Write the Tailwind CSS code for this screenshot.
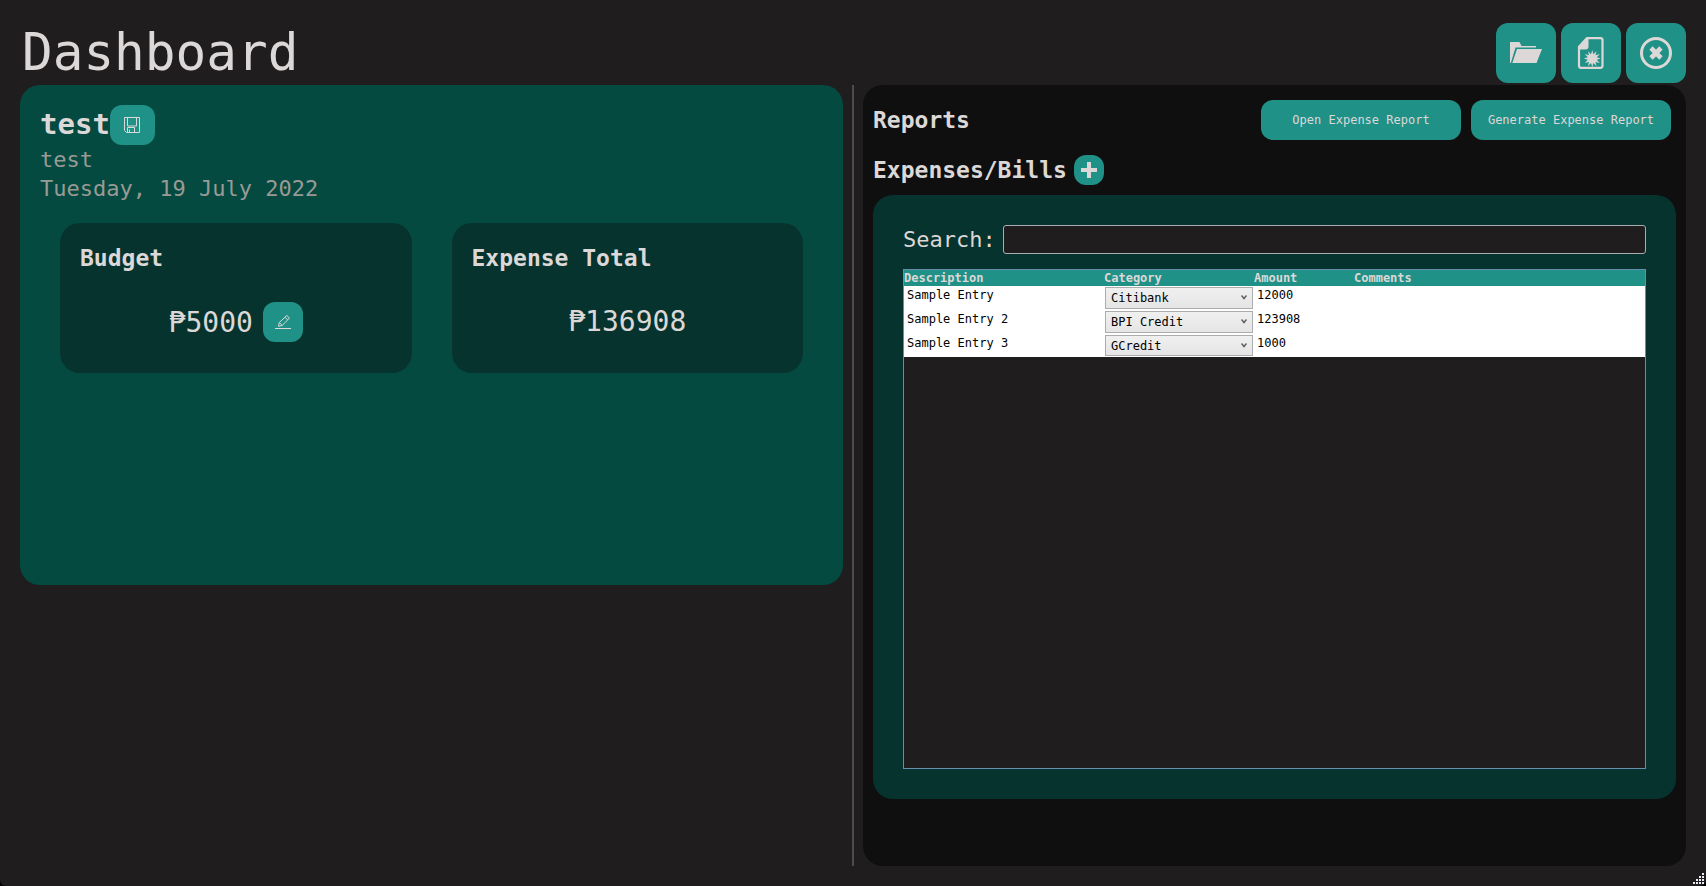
<!DOCTYPE html>
<html lang="en">
<head>
<meta charset="utf-8">
<title>Dashboard</title>
<script src="https://cdn.jsdelivr.net/npm/@tailwindcss/browser@4"></script>
</head>
<body class="bg-black font-['DejaVu_Sans_Mono',monospace] text-[#dcd8d7]">
<div class="relative flex min-h-screen flex-col rounded-b-md bg-[#1f1d1e] px-5 pb-5">
  <header class="flex h-[85px] items-end justify-between">
    <h1 class="pb-0.5 pl-0.5 text-[51px] leading-[60px]">Dashboard</h1>
    <div class="flex gap-[5px] pb-0.5">
      <button aria-label="Open" class="flex size-[60px] items-center justify-center rounded-xl bg-[#209187]">
        <svg class="size-8" viewBox="0 0 32 32" fill="#dcd8d7"><path d="M0 5h9.500l2 4H26v1.500H5.500L.8 26H0z"/><path d="M7 12h25l-5.500 14H2.300z"/></svg>
      </button>
      <button aria-label="New" class="flex size-[60px] items-center justify-center rounded-xl bg-[#209187]">
        <svg class="size-8" viewBox="0 0 32 32"><path d="M12 1.200h13.500a2 2 0 0 1 2 2v25.600a2 2 0 0 1-2 2H6a2 2 0 0 1-2-2V10z" fill="none" stroke="#dcd8d7" stroke-width="2.200"/><path d="M11 1h2.500v8.500a3 3 0 0 1-3 3H3.500V9z" fill="#dcd8d7"/><path d="m17.300 13 1 4.200 3.200-3-1 4.100 4.300-1.200-3 3.200 3.700 1.200-3.700 1.300 3 3.300-4.300-1.100 1 4-3.200-2.900-1 4.100-1.300-4.100-3 2.900 1-4-4.200 1.100 3-3.300-4-1.300 4-1.200-3-3.200 4.200 1.200-1-4.100 3 3z" fill="#dcd8d7"/></svg>
      </button>
      <button aria-label="Close" class="flex size-[60px] items-center justify-center rounded-xl bg-[#209187]">
        <svg class="size-8" viewBox="0 0 32 32" fill="none" stroke="#dcd8d7"><circle cx="16" cy="16" r="14.500" stroke-width="3"/><path d="m11 11 10 10m0-10-10 10" stroke-width="4.600"/></svg>
      </button>
    </div>
  </header>

  <main class="grid flex-1 grid-cols-[1fr_2px_1fr] gap-x-[9px]">
    <section class="min-h-[500px] self-start rounded-[20px] bg-[#044a40] p-5">
      <div class="flex h-10 items-center">
        <h2 class="text-[29px] font-bold">test</h2>
        <button aria-label="Save" class="flex h-10 w-[45px] items-center justify-center rounded-xl bg-[#209187]">
          <svg class="size-4" viewBox="0 0 16 16" fill="none" stroke="#dcd8d7"><path d="M.5.500h15v15h-13l-2-2z"/><path d="M3.500 1v8h9V1M3.500 15.500v-5h7v5M5.500 12.500v3"/></svg>
        </button>
      </div>
      <p class="text-[22px] leading-[30px] text-[#999a95]">test</p>
      <p class="text-[22px] leading-7 text-[#999a95]">Tuesday, 19 July 2022</p>
      <div class="mt-5 grid grid-cols-2 gap-10 px-5">
        <article class="flex h-[150px] flex-col rounded-[20px] bg-[#07332e] p-5">
          <h3 class="text-[23px] leading-[30px] font-bold">Budget</h3>
          <div class="flex flex-1 items-center justify-center gap-2.5 pt-[18px]">
            <span class="pt-0.5 text-[28px] leading-9">₱5000</span>
            <button aria-label="Edit budget" class="flex size-10 items-center justify-center rounded-xl bg-[#209187]">
              <svg class="size-4" viewBox="0 0 16 16" fill="none" stroke="#dcd8d7"><path d="M0 14.500h16"/><path d="m3.500 12.300.8-3.800 7.500-7 2.700 2.600-7.300 7.300zM4.300 8.500l2.900 2.900M10 3.200l2.700 2.700"/></svg>
            </button>
          </div>
        </article>
        <article class="flex h-[150px] flex-col rounded-[20px] bg-[#07332e] p-5">
          <h3 class="text-[23px] leading-[30px] font-bold">Expense Total</h3>
          <div class="flex flex-1 items-center justify-center pt-[18px]">
            <span class="text-[28px] leading-9">₱136908</span>
          </div>
        </article>
      </div>
    </section>

    <div class="bg-[#4d4b4c]"></div>

    <section class="flex flex-col rounded-[20px] bg-[#0f0f0f] px-2.5 pt-[15px]">
      <div class="flex h-10 items-center justify-between pr-[5px]">
        <h2 class="text-[23px] font-bold">Reports</h2>
        <div class="flex gap-2.5 text-xs">
          <button class="h-10 w-[200px] rounded-xl bg-[#209187]">Open Expense Report</button>
          <button class="h-10 w-[200px] rounded-xl bg-[#209187]">Generate Expense Report</button>
        </div>
      </div>
      <div class="mt-[15px] flex h-[30px] items-center gap-[7px]">
        <h2 class="text-[23px] font-bold">Expenses/Bills</h2>
        <button aria-label="Add expense" class="flex size-[30px] items-center justify-center rounded-xl bg-[#209187]">
          <svg class="size-4" viewBox="0 0 16 16" fill="#dcd8d7"><path d="M6 0h4v6h6v4h-6v6H6v-6H0V6h6z"/></svg>
        </button>
      </div>
      <div class="mt-2.5 mb-[67px] flex flex-1 flex-col rounded-[20px] bg-[#07332e] p-[30px]">
        <div class="flex h-[29px] items-center gap-[7px]">
          <label for="search" class="text-[22px]">Search:</label>
          <input id="search" type="text" class="h-full min-w-0 flex-1 rounded-[3px] border border-[#abadb3] bg-[#1f1d1e] px-1 text-[22px]">
        </div>
        <div class="mt-[15px] flex-1 border border-[#688caf] bg-[#1f1d1e]">
          <table class="w-full table-fixed border-collapse text-xs">
            <colgroup><col class="w-[200px]"><col class="w-[150px]"><col class="w-[100px]"><col></colgroup>
            <thead class="bg-[#209187] text-left">
              <tr class="h-4 leading-4"><th>Description</th><th>Category</th><th>Amount</th><th>Comments</th></tr>
            </thead>
            <tbody class="bg-white leading-4 text-black">
              <tr class="h-6 align-top">
                <td class="pt-px pl-[3px]">Sample Entry</td>
                <td class="p-px"><div class="relative"><select aria-label="Category of Sample Entry" class="block h-[22px] w-full appearance-none border border-[#acacac] bg-linear-to-b from-[#f0f0f0] to-[#e5e5e5] pl-[5px]"><option>Citibank</option><option>BPI Credit</option><option>GCredit</option></select><svg class="pointer-events-none absolute top-2 right-[6px] h-[5px] w-[6px]" viewBox="0 0 6 5" fill="none" stroke="#606060" stroke-width="1.500"><path d="m.5.500 2.500 3 2.500-3"/></svg></div></td>
                <td class="pt-px pl-[3px]">12000</td><td></td>
              </tr>
              <tr class="h-6 align-top">
                <td class="pt-px pl-[3px]">Sample Entry 2</td>
                <td class="p-px"><div class="relative"><select aria-label="Category of Sample Entry 2" class="block h-[22px] w-full appearance-none border border-[#acacac] bg-linear-to-b from-[#f0f0f0] to-[#e5e5e5] pl-[5px]"><option>Citibank</option><option selected>BPI Credit</option><option>GCredit</option></select><svg class="pointer-events-none absolute top-2 right-[6px] h-[5px] w-[6px]" viewBox="0 0 6 5" fill="none" stroke="#606060" stroke-width="1.500"><path d="m.5.500 2.500 3 2.500-3"/></svg></div></td>
                <td class="pt-px pl-[3px]">123908</td><td></td>
              </tr>
              <tr class="h-[23px] align-top">
                <td class="pt-px pl-[3px]">Sample Entry 3</td>
                <td class="p-px"><div class="relative"><select aria-label="Category of Sample Entry 3" class="block h-[21px] w-full appearance-none border border-[#acacac] bg-linear-to-b from-[#f0f0f0] to-[#e5e5e5] pl-[5px]"><option>Citibank</option><option>BPI Credit</option><option selected>GCredit</option></select><svg class="pointer-events-none absolute top-2 right-[6px] h-[5px] w-[6px]" viewBox="0 0 6 5" fill="none" stroke="#606060" stroke-width="1.500"><path d="m.5.500 2.500 3 2.500-3"/></svg></div></td>
                <td class="pt-px pl-[3px]">1000</td><td></td>
              </tr>
            </tbody>
          </table>
        </div>
      </div>
    </section>
  </main>

  <!-- Window resize grip -->
  <svg class="absolute right-[2px] bottom-[2px] h-[11px] w-[11px]" viewBox="0 0 11 11" fill="#e8eef4"><path d="M0 9h2v2H0zM3 9h2v2H3zM6 9h2v2H6zM9 9h2v2H9zM3 6h2v2H3zM6 6h2v2H6zM9 6h2v2H9zM6 3h2v2H6zM9 3h2v2H9zM9 0h2v2H9z"/></svg>
</div>
</body>
</html>
